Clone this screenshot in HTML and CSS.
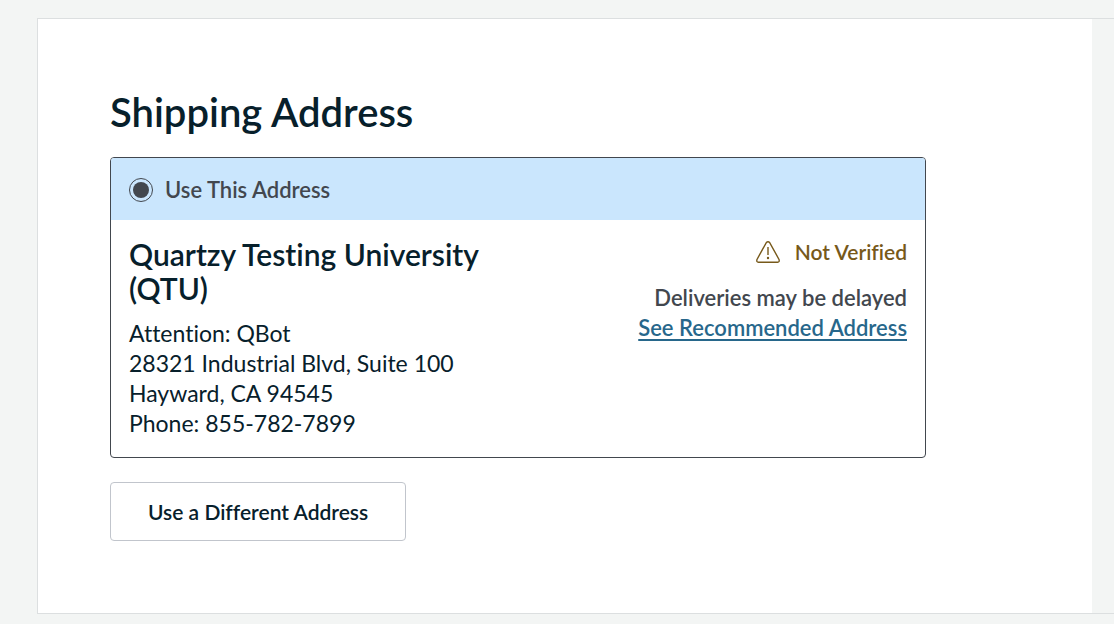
FILE: index.html
```html
<!DOCTYPE html>
<html lang="en">
<head>
<meta charset="utf-8">
<title>Shipping Address</title>
<link rel="stylesheet" href="styles.css">
</head>
<body>
<div class="sheet">
  <main class="content">
    <h1 class="title">Shipping Address</h1>
    <section class="card">
      <label class="choice">
        <input class="radio" type="radio" name="address" checked>
        <span>Use This Address</span>
      </label>
      <div class="details">
        <div class="recipient">
          <h2 class="name">Quartzy Testing University (QTU)</h2>
          <address class="lines">Attention: QBot<br>28321 Industrial Blvd, Suite 100<br>Hayward, CA 94545<br>Phone: 855-782-7899</address>
        </div>
        <div class="status">
          <p class="flag">
            <svg class="warning" viewBox="0 0 24 22" aria-hidden="true">
              <path d="M10.3 1.6Q12 0 13.7 1.6L23 18.4Q23.8 21.2 21.6 21.2H2.4Q.2 21.2 1 18.4Z"/>
              <path d="M12 6V14"/>
              <circle cx="12" cy="17" r="1.2"/>
            </svg>
            <span>Not Verified</span>
          </p>
          <p class="note">Deliveries may be delayed</p>
          <a class="link" href="#recommended">See Recommended Address</a>
        </div>
      </div>
    </section>
    <button class="button" type="button">Use a Different Address</button>
  </main>
</div>
</body>
</html>
```

FILE: styles.css
```css
* {
  box-sizing: border-box;
}

body {
  margin: 0;
  padding: 18px 0 10px 37px;
  background: #f3f5f4;
  color: #07202b;
  font-family: Lato, "Liberation Sans", sans-serif;
  font-variant-ligatures: none;
}

.sheet {
  padding-right: 22px;
  border: 1px solid #dcdfe0;
  border-right: 0;
}

.content {
  padding: 69px 166px 72px 72px;
  background: #fff;
}

.title {
  margin: 0 0 21px;
  font-size: 40px;
  font-weight: 600;
  line-height: 48px;
}

.card {
  margin-bottom: 24px;
  overflow: hidden;
  border: 1px solid #42474e;
  border-radius: 4px;
}

.choice {
  display: flex;
  align-items: center;
  gap: 12px;
  padding: 17px 18px 15px;
  background: #cae6fd;
  color: #42474e;
  font-size: 22px;
  font-weight: 600;
  line-height: 30px;
}

.radio {
  appearance: none;
  width: 24px;
  height: 24px;
  margin: 0;
  border: 1px solid #42474e;
  border-radius: 50%;
  background: #42474e;
  background-clip: content-box;
  padding: 3px;
}

.details {
  display: flex;
  justify-content: space-between;
  padding: 17px 18px 19px;
}

.recipient {
  flex: 0 1 380px;
}

.name {
  margin: 0 0 13px;
  font-size: 30px;
  font-weight: 600;
  line-height: 34px;
}

.lines {
  font-size: 23px;
  font-style: normal;
  line-height: 30px;
}

.status {
  color: #42474e;
  font-size: 22px;
  font-weight: 600;
  line-height: 30px;
  text-align: right;
}

.flag {
  display: flex;
  align-items: center;
  justify-content: flex-end;
  gap: 15px;
  margin: 0 0 16px;
  color: #77591a;
  font-size: 21px;
}

.warning {
  width: 24px;
  height: 22px;
  fill: none;
  stroke: currentColor;
  stroke-width: 1.4;
}

.warning circle {
  fill: currentColor;
  stroke: none;
}

.note {
  margin: 0;
}

.link {
  color: #27678b;
  text-decoration-thickness: 2px;
  text-underline-offset: 3px;
}

.button {
  padding: 14px 37px;
  border: 1px solid #c1c5cc;
  border-radius: 4px;
  background: #fff;
  color: inherit;
  font: 600 21px/29px Lato, "Liberation Sans", sans-serif;
  font-variant-ligatures: none;
}
```
